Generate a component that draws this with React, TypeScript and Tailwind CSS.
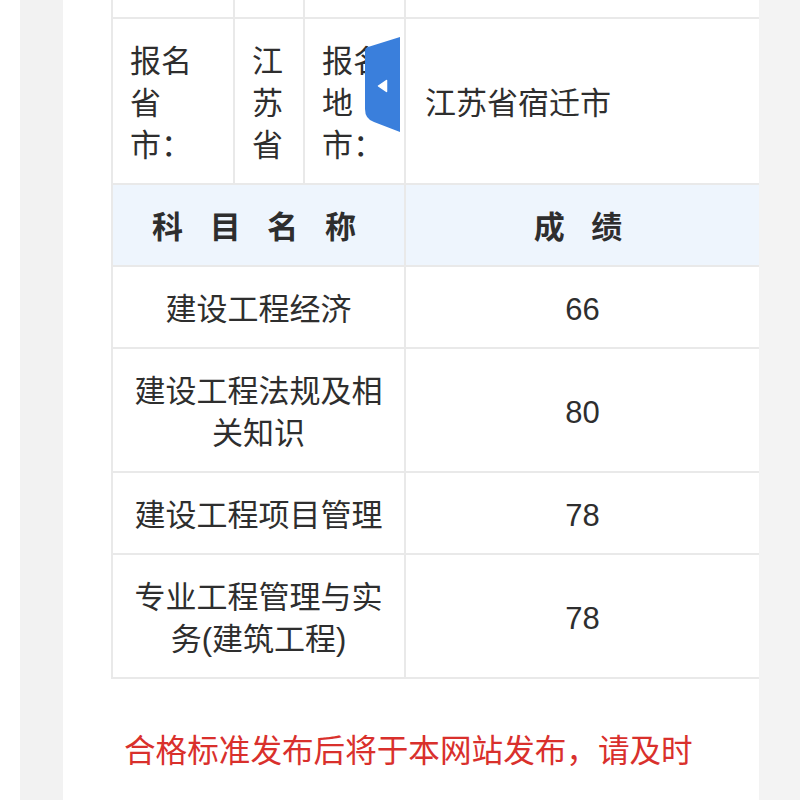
import React from "react";

const subjects = [
  { name: "建设工程经济", score: "66" },
  { name: "建设工程法规及相关知识", score: "80" },
  { name: "建设工程项目管理", score: "78" },
  { name: "专业工程管理与实务(建筑工程)", score: "78" },
];

const cell = "border-2 border-[#e9e9e9] px-[17px] pt-[22px] pb-[16px] align-middle";

function SideTab() {
  return (
    <div className="absolute left-[365px] top-[37px] h-[95px] w-[35px]">
      <svg viewBox="0 0 35 95" width="35" height="95">
        <path d="M0 13 Q0 11 3 10 L35 0 L35 95 L9 85 Q0 82 0 72 Z" fill="#3a7fdc" />
        <path d="M13.5 49 L21.5 43.5 L21.5 54.5 Z" fill="#ffffff" stroke="#ffffff" strokeWidth="1.5" strokeLinejoin="round" />
      </svg>
    </div>
  );
}

export default function App() {
  return (
    <div className="relative flex h-[800px] w-[800px] overflow-hidden bg-white font-['Liberation_Sans','Noto_Sans_CJK_SC',sans-serif] text-[31px] leading-[42px] text-[#2e2e2e]">
      <div className="w-[20px] shrink-0 bg-white" />
      <div className="w-[43px] shrink-0 bg-[#f2f2f2]" />

      {/* result card */}
      <div className="w-[696px] shrink-0 bg-white pl-[48px]">
        <table className="-mt-[42px] w-[648px] table-fixed border-collapse">
          <colgroup>
            <col className="w-[122px]" />
            <col className="w-[70px]" />
            <col className="w-[101px]" />
            <col className="w-[355px]" />
          </colgroup>
          <tbody>
            <tr>
              <td className="h-[59px] border-2 border-[#e9e9e9] p-0" />
              <td className="h-[59px] border-2 border-[#e9e9e9] p-0" />
              <td className="h-[59px] border-2 border-[#e9e9e9] p-0" />
              <td className="h-[59px] border-2 border-[#e9e9e9] p-0" />
            </tr>
            <tr>
              <td className={cell}>报名省市：</td>
              <td className={cell}>江苏省</td>
              <td className={cell}>报名地市：</td>
              <td className={`${cell} px-[19px]`}>江苏省宿迁市</td>
            </tr>
            <tr className="bg-[#eef5fd]">
              <td colSpan={3} className={`${cell} text-center font-bold tracking-[9px]`}>
                科 目 名 称
              </td>
              <td className={`${cell} text-center font-bold tracking-[9px]`}>成 绩</td>
            </tr>
            {subjects.map((s) => (
              <tr key={s.name}>
                <td colSpan={3} className={`${cell} text-center`}>
                  {s.name}
                </td>
                <td className={`${cell} text-center`}>{s.score}</td>
              </tr>
            ))}
          </tbody>
        </table>

        <p className="ml-[13px] mt-[51px] w-[590px] text-[31.6px] text-[#d9302c]">
          合格标准发布后将于本网站发布，请及时
        </p>
      </div>

      <div className="flex-1 bg-[#f3f3f3]" />

      <SideTab />
    </div>
  );
}
